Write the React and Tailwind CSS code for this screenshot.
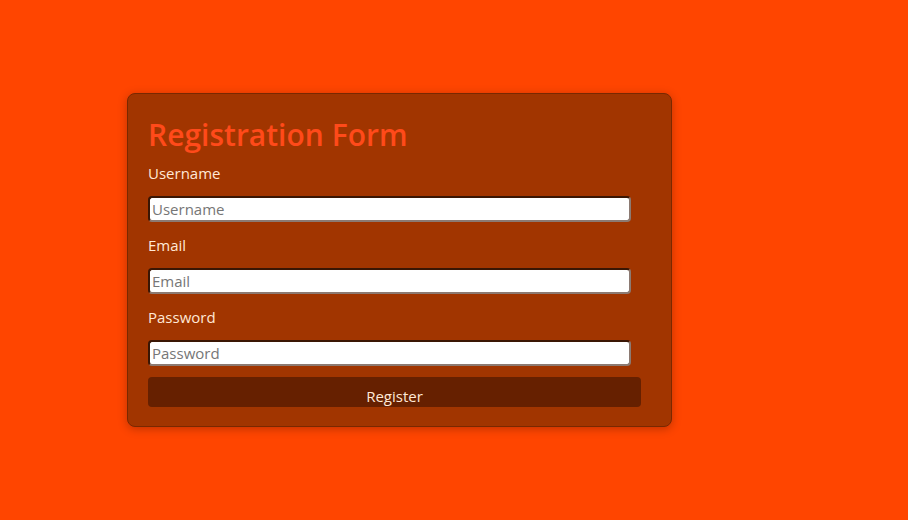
export default function App() {
  return (
    <div className="min-h-[520px] w-full bg-[#ff4500] pt-[93px] pl-[127px] font-['Open_Sans',sans-serif]">
      <div className="w-[545px] rounded-lg border border-[#7a2800] bg-[#a13500] pl-5 pr-[30px] pt-[26px] pb-[19px] shadow-[0_2px_10px_rgba(0,0,0,0.25)]">
        <h1 className="text-[30px] leading-[30px] font-semibold text-[#ff4a1a]">Registration Form</h1>
        <form className="flex flex-col" onSubmit={(e) => e.preventDefault()}>
          {[
            { label: 'Username', type: 'text' },
            { label: 'Email', type: 'email' },
            { label: 'Password', type: 'password' },
          ].map(({ label, type }) => (
            <div key={label} className="flex flex-col">
              <label className="my-[13px] text-[15px] leading-[20px] text-[#ffe8d6]">{label}</label>
              <input
                type={type}
                placeholder={label}
                className="h-[26px] w-[483px] rounded-[4px] border-2 border-t-[#3a1604] border-l-[#3a1604] border-b-[#8c7a72] border-r-[#8c7a72] bg-white px-[2px] text-[15px] text-black placeholder:text-[#767676]"
              />
            </div>
          ))}
          <button
            type="submit"
            className="mt-[11px] h-[30px] w-[493px] rounded-[4px] bg-[#662000] pt-[8px] text-[15px] leading-[22px] text-[#ffe8d6]"
          >
            Register
          </button>
        </form>
      </div>
    </div>
  );
}
